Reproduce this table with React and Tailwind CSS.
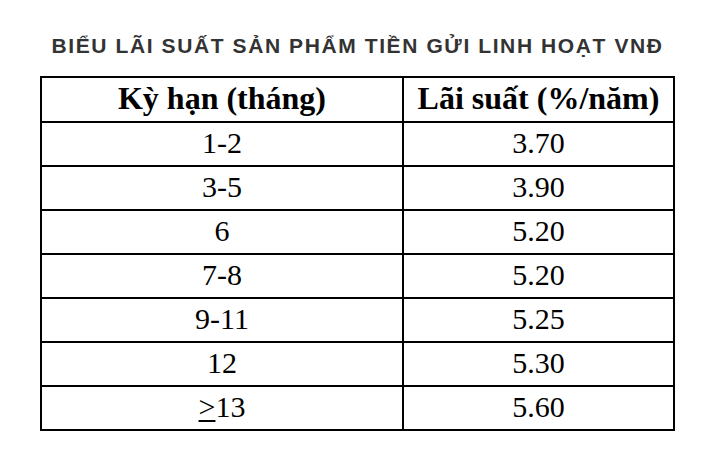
const rows = [
  ["1-2", "3.70"],
  ["3-5", "3.90"],
  ["6", "5.20"],
  ["7-8", "5.20"],
  ["9-11", "5.25"],
  ["12", "5.30"],
  [">13", "5.60"],
];

export default function App() {
  return (
    <div className="w-[706px] h-[456px] bg-white pt-[33px]">
      <div className="ml-[40px] w-[635px]">
        <h1
          className="text-center text-[21px] leading-[26px] font-bold tracking-[1.6px] text-[#333333] whitespace-nowrap -mx-[20px]"
          style={{ fontFamily: '"Liberation Sans", Arial, sans-serif' }}
        >
          BIỂU LÃI SUẤT SẢN PHẨM TIỀN GỬI LINH HOẠT VNĐ
        </h1>
        <table
          className="mt-[17px] w-full border-collapse border-2 border-black text-black"
          style={{ fontFamily: '"Liberation Serif", "Times New Roman", serif' }}
        >
          <thead>
            <tr className="h-[45px]">
              <th className="w-[362px] border-2 border-black text-[32px] leading-[36px] font-bold p-0 pb-[3px]">Kỳ hạn (tháng)</th>
              <th className="border-2 border-black text-[32px] leading-[36px] font-bold p-0 pb-[3px]">Lãi suất (%/năm)</th>
            </tr>
          </thead>
          <tbody>
            {rows.map(([term, rate]) => (
              <tr key={term} className="h-[44px]">
                <td className="border-2 border-black text-center text-[30px] leading-[36px] p-0 pb-[3px]">
                  {term === ">13" ? (
                    <>
                      <span className="underline decoration-2 underline-offset-[3px]">&gt;</span>13
                    </>
                  ) : (
                    term
                  )}
                </td>
                <td className="border-2 border-black text-center text-[30px] leading-[36px] p-0 pb-[3px]">{rate}</td>
              </tr>
            ))}
          </tbody>
        </table>
      </div>
    </div>
  );
}
